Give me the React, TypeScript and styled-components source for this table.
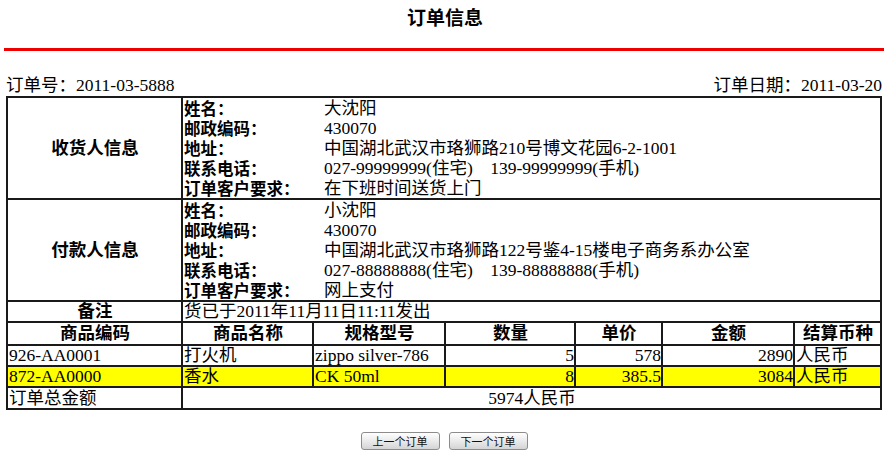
import React from "react";
import styled, { createGlobalStyle } from "styled-components";

const GlobalStyle = createGlobalStyle`
  html, body { margin: 0; padding: 0; background: #fff; }
  body {
    font-family: "Liberation Serif", "Noto Sans CJK SC", serif;
    color: #000;
  }
`;

const Page = styled.div`
  width: 890px;
  padding: 0 0 0 6px;
  box-sizing: border-box;
`;

const Title = styled.h1`
  margin: 0;
  height: 33px;
  line-height: 33px;
  text-align: center;
  font-family: "Noto Sans CJK SC", sans-serif;
  font-size: 19px;
  font-weight: 700;
  padding-right: 6px;
`;

const RedRule = styled.div`
  height: 3px;
  background: #ee0000;
  margin: 15px 6px 0 -2px;
`;

const InfoBar = styled.div`
  display: flex;
  justify-content: space-between;
  width: 876px;
  margin-top: 24px;
  height: 21px;
  line-height: 21px;
  font-size: 17.5px;
`;

const Table = styled.table`
  width: 876px;
  table-layout: fixed;
  border-collapse: collapse;
  border: 2px solid #1a1a1a;
  font-size: 17.5px;
`;

const Row = styled.tr<{ $h?: number }>`
  height: ${(p) => p.$h ?? 21}px;
`;

const Cell = styled.td<{ $align?: "left" | "center" | "right"; $bold?: boolean; $hl?: boolean }>`
  border: 2px solid #1a1a1a;
  padding: 0 0 0 1px;
  line-height: 19px;
  text-align: ${(p) => p.$align ?? "left"};
  font-weight: ${(p) => (p.$bold ? 700 : 400)};
  background: ${(p) => (p.$hl ? "#ffff00" : "transparent")};
  white-space: nowrap;
  overflow: hidden;
  vertical-align: middle;
`;

const InfoGrid = styled.div`
  display: grid;
  grid-template-columns: 140px 1fr;
  grid-auto-rows: 20px;
  line-height: 20px;
`;

const Label = styled.span`
  font-weight: 700;
  font-family: "Noto Sans CJK SC", sans-serif;
  font-size: 16.5px;
  line-height: 20px;
`;

const Value = styled.span`
  white-space: pre;
  line-height: 20px;
`;

const Buttons = styled.div`
  display: flex;
  justify-content: center;
  gap: 9px;
  width: 876px;
  margin-top: 22px;
`;

const Button = styled.button`
  height: 18px;
  padding: 0 11px;
  font-family: "Noto Sans CJK SC", sans-serif;
  font-size: 11px;
  line-height: 16px;
  color: #111;
  border: 1px solid #8c8c8c;
  border-radius: 3px;
  background: linear-gradient(#fefefe, #e6e6e6 60%, #d4d4d4);
  cursor: pointer;
`;

type Info = { label: string; value: string }[];

const receiver: Info = [
  { label: "姓名：", value: "大沈阳" },
  { label: "邮政编码：", value: "430070" },
  { label: "地址：", value: "中国湖北武汉市珞狮路210号博文花园6-2-1001" },
  { label: "联系电话：", value: "027-99999999(住宅)    139-99999999(手机)" },
  { label: "订单客户要求：", value: "在下班时间送货上门" },
];

const payer: Info = [
  { label: "姓名：", value: "小沈阳" },
  { label: "邮政编码：", value: "430070" },
  { label: "地址：", value: "中国湖北武汉市珞狮路122号鉴4-15楼电子商务系办公室" },
  { label: "联系电话：", value: "027-88888888(住宅)    139-88888888(手机)" },
  { label: "订单客户要求：", value: "网上支付" },
];

const items = [
  { code: "926-AA0001", name: "打火机", spec: "zippo silver-786", qty: "5", price: "578", amount: "2890", cur: "人民币", hl: false },
  { code: "872-AA0000", name: "香水", spec: "CK 50ml", qty: "8", price: "385.5", amount: "3084", cur: "人民币", hl: true },
];

const headers = ["商品编码", "商品名称", "规格型号", "数量", "单价", "金额", "结算币种"];
const widths = [175, 131, 132, 130, 87, 132, 87];

function InfoSection({ title, info }: { title: string; info: Info }) {
  return (
    <Row $h={100}>
      <Cell $align="center" $bold>
        {title}
      </Cell>
      <Cell colSpan={6}>
        <InfoGrid>
          {info.map((r) => (
            <React.Fragment key={r.label}>
              <Label>{r.label}</Label>
              <Value>{r.value}</Value>
            </React.Fragment>
          ))}
        </InfoGrid>
      </Cell>
    </Row>
  );
}

export default function App() {
  return (
    <>
      <GlobalStyle />
      <Page>
        <Title>订单信息</Title>
        <RedRule />
        <InfoBar>
          <span>订单号：2011-03-5888</span>
          <span>订单日期：2011-03-20</span>
        </InfoBar>
        <Table>
          <colgroup>
            {widths.map((w, i) => (
              <col key={i} style={{ width: w }} />
            ))}
          </colgroup>
          <tbody>
            <InfoSection title="收货人信息" info={receiver} />
            <InfoSection title="付款人信息" info={payer} />
            <Row>
              <Cell $align="center" $bold>
                备注
              </Cell>
              <Cell colSpan={6}>货已于2011年11月11日11:11发出</Cell>
            </Row>
            <Row $h={23}>
              {headers.map((h) => (
                <Cell key={h} $align="center" $bold>
                  {h}
                </Cell>
              ))}
            </Row>
            {items.map((it) => (
              <Row key={it.code}>
                <Cell $hl={it.hl}>{it.code}</Cell>
                <Cell $hl={it.hl}>{it.name}</Cell>
                <Cell $hl={it.hl}>{it.spec}</Cell>
                <Cell $hl={it.hl} $align="right">{it.qty}</Cell>
                <Cell $hl={it.hl} $align="right">{it.price}</Cell>
                <Cell $hl={it.hl} $align="right">{it.amount}</Cell>
                <Cell $hl={it.hl}>{it.cur}</Cell>
              </Row>
            ))}
            <Row $h={22}>
              <Cell>订单总金额</Cell>
              <Cell colSpan={6} $align="center">
                5974人民币
              </Cell>
            </Row>
          </tbody>
        </Table>
        <Buttons>
          <Button>上一个订单</Button>
          <Button>下一个订单</Button>
        </Buttons>
      </Page>
    </>
  );
}
